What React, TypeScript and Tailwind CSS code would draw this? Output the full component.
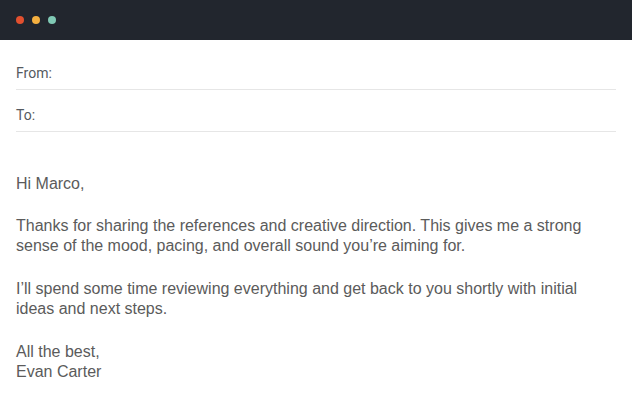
export default function App() {
  return (
    <div className="h-[398px] w-[632px] overflow-hidden bg-white">
      <div className="flex h-10 items-center gap-2 bg-[#22262e] px-4">
        <span className="h-2 w-2 rounded-full bg-[#e2502f]" />
        <span className="h-2 w-2 rounded-full bg-[#f5b040]" />
        <span className="h-2 w-2 rounded-full bg-[#80c9b5]" />
      </div>
      <div className="px-4 pt-4 font-['Roboto',sans-serif] text-[14px] text-[#555a60]">
        <div className="flex h-[34px] items-center border-b border-[#e6e6e6] pt-[2px]">From:</div>
        <div className="flex h-[42px] items-center border-b border-[#e6e6e6] pt-[10px]">To:</div>
      </div>
      <div className="px-4 pt-[42px] font-['Liberation_Sans',Arial,sans-serif] text-[16px] leading-[20px] text-[#5b5b5b]">
        <p className="mb-[22px]">Hi Marco,</p>
        <p className="mb-[23px]">
          Thanks for sharing the references and creative direction. This gives me a strong sense of
          the mood, pacing, and overall sound you’re aiming for.
        </p>
        <p className="mb-[23px]">
          I’ll spend some time reviewing everything and get back to you shortly with initial ideas
          and next steps.
        </p>
        <p>
          All the best,
          <br />
          Evan Carter
        </p>
      </div>
    </div>
  );
}
